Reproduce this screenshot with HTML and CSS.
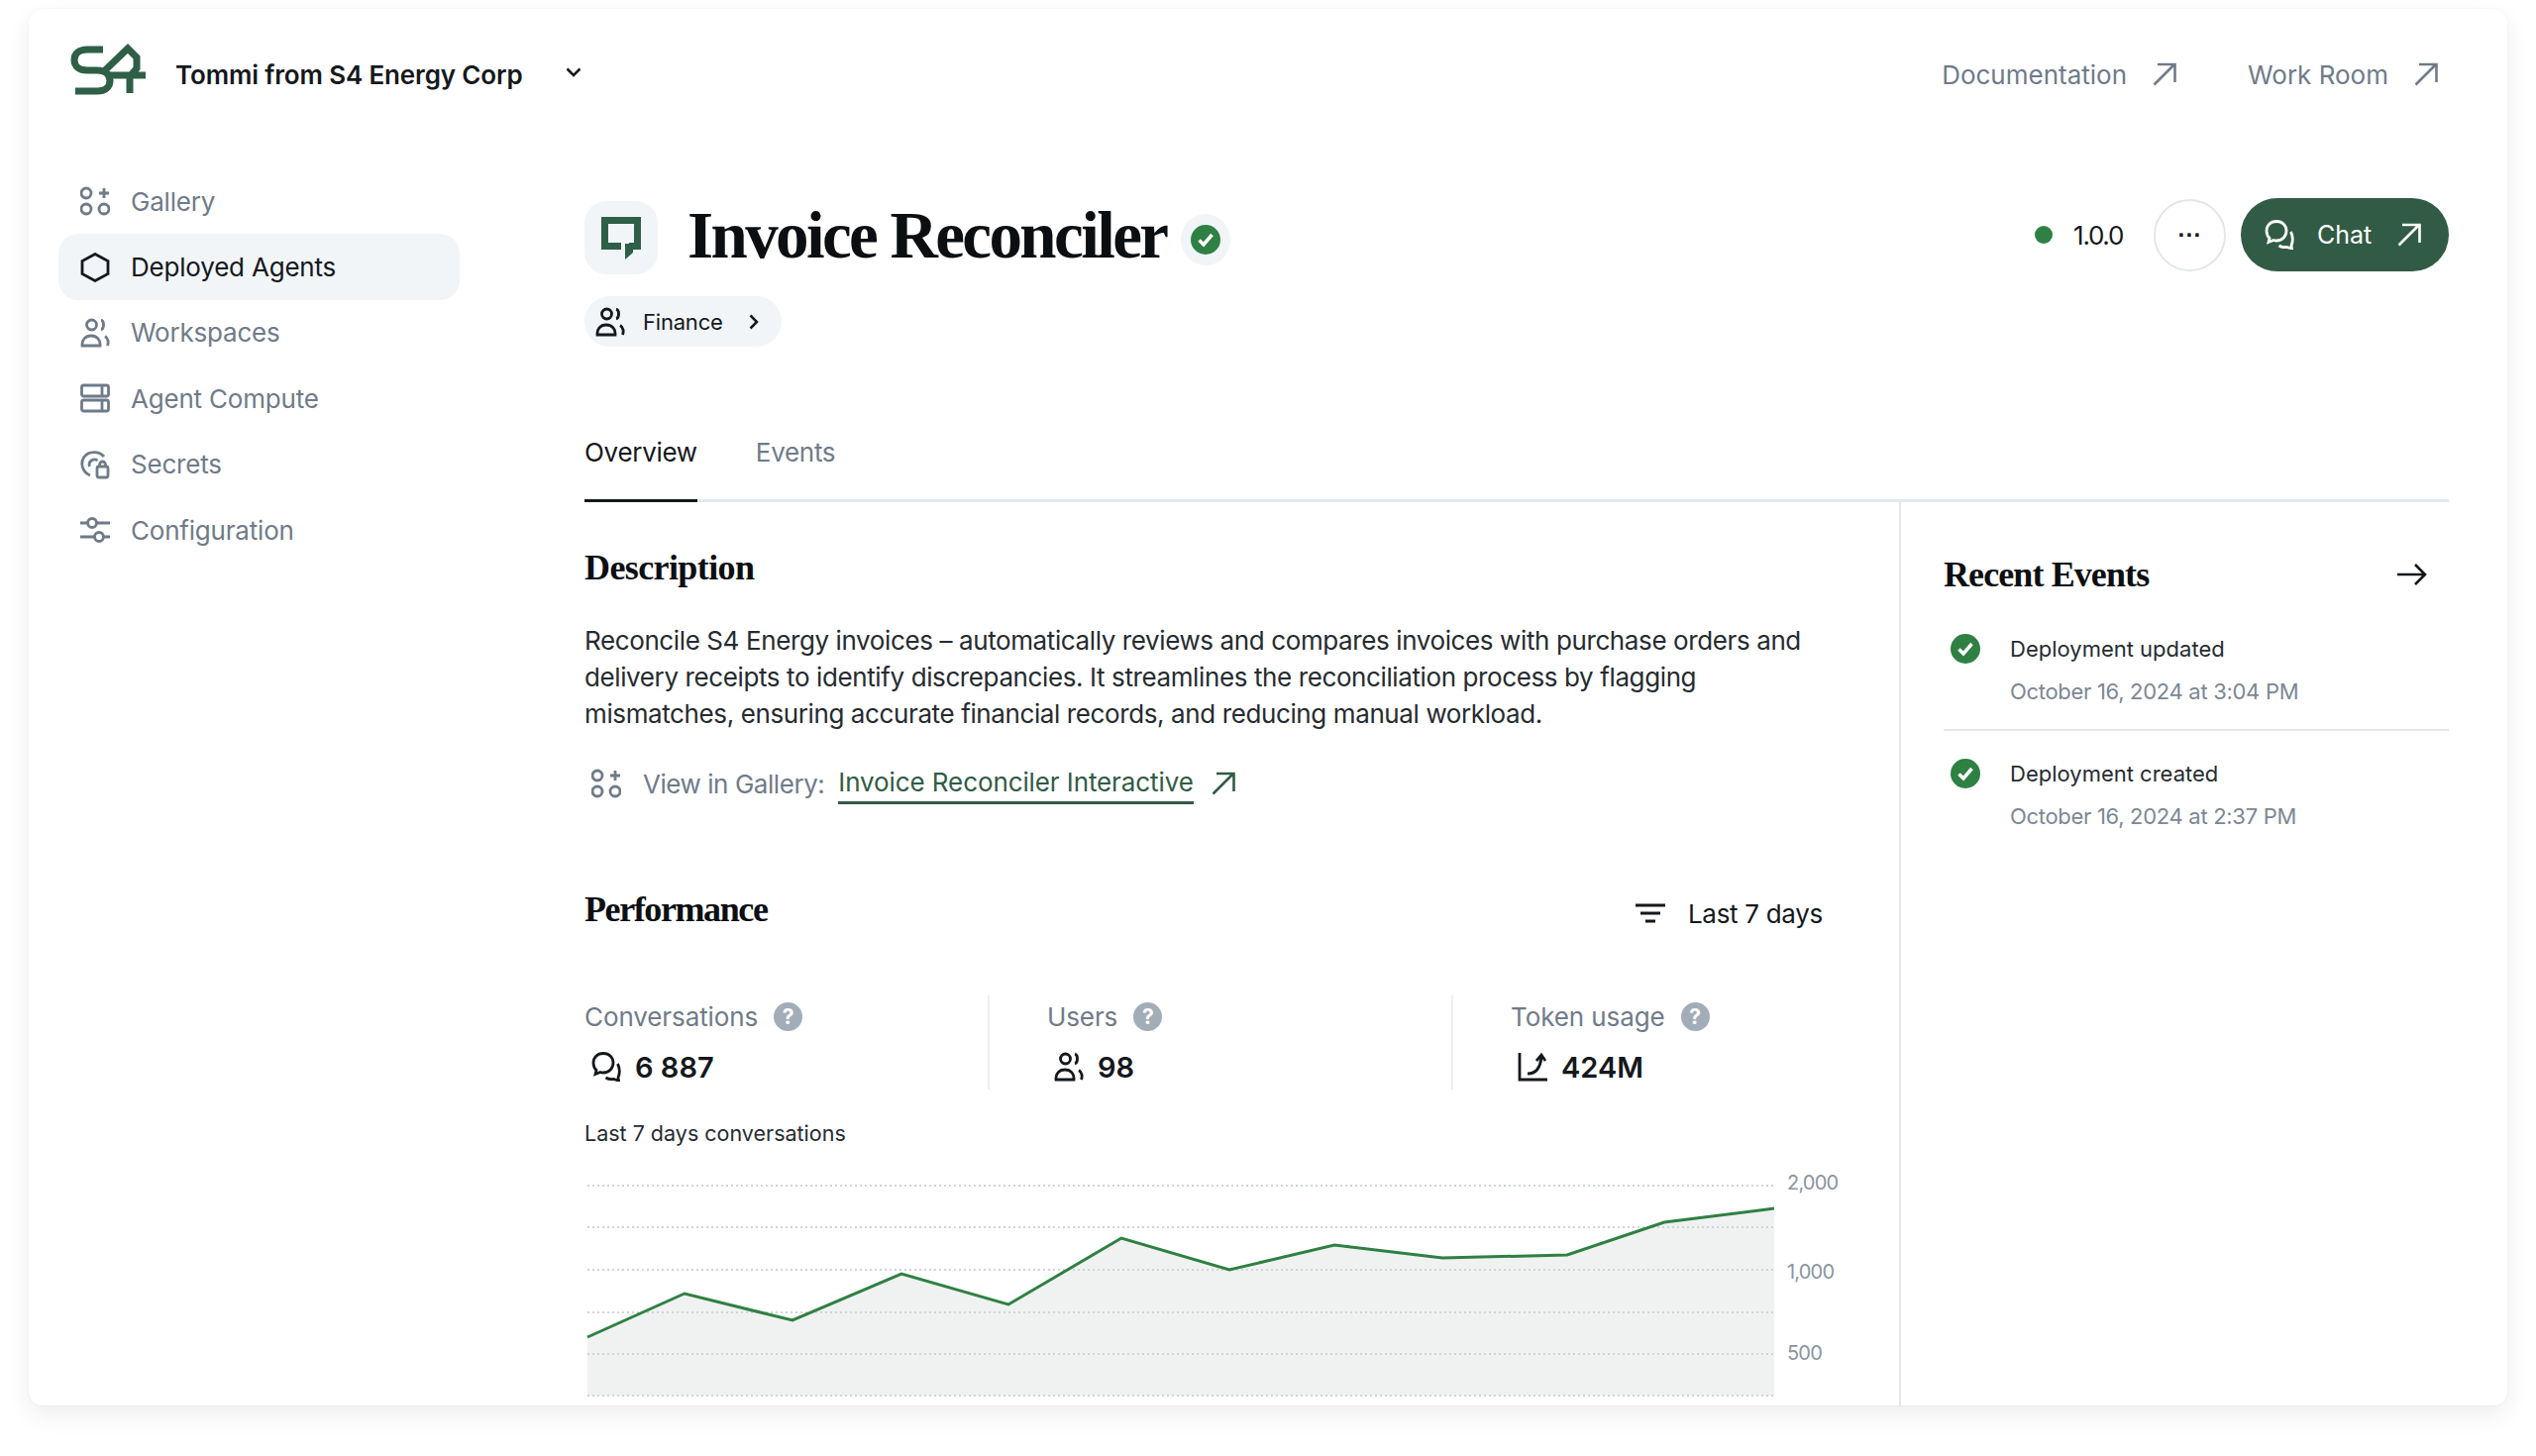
FILE: index.html
```html
<!DOCTYPE html>
<html lang="en">
<head>
    <meta charset="UTF-8">
    <title>Invoice Reconciler</title>
    <link rel="stylesheet" href="styles.css">
</head>
<body>
    <svg class="icon-defs" width="0" height="0">
        <symbol id="i-gallery" viewBox="0 0 30 30"><circle cx="6" cy="7" r="5"/><circle cx="6" cy="23" r="5"/><circle cx="24" cy="23" r="5"/><path d="M24 2v10M19 7h10"/></symbol>
        <symbol id="i-hex" viewBox="0 0 30 30"><path d="M15 1.500 28 8.500v13L15 28.500 2 21.500v-13z"/></symbol>
        <symbol id="i-people" viewBox="0 0 30 30"><circle cx="11.500" cy="7" r="5"/><path d="M21 2.200c3.400.8 3.400 8.800 0 9.600M2 28c-.6-5.500 3-10 9-10s9.600 4.500 9 10zM25 18.500c3.400 2 3.800 6.500 2.400 9.500"/></symbol>
        <symbol id="i-compute" viewBox="0 0 30 30"><rect x="1.500" y="2" width="27" height="11" rx="2"/><rect x="1.500" y="17" width="27" height="11" rx="2"/><path d="M22 2v11M22 17v11"/></symbol>
        <symbol id="i-secrets" viewBox="0 0 30 30"><path d="M24 7C19 1 8 1 3.500 8-.5 15 3 23 10 26"/><path d="M9.500 17c-2-5 4-9 8-6"/><rect x="17" y="17" width="11" height="11" rx="2"/><path d="M19.500 17v-2a3 3 0 0 1 6 0v2"/></symbol>
        <symbol id="i-config" viewBox="0 0 30 30"><path d="M0 8h7M17 8h13M0 22h14M24 22h6"/><circle cx="12" cy="8" r="4.500"/><circle cx="19" cy="22" r="4.500"/></symbol>
        <symbol id="i-chat" viewBox="0 0 30 30"><path d="M12 1.500c-6 0-10 4-10 9.500 0 3 1 5.500 3 7.500l-1 4 5-2c1 .3 2 .5 3 .5 6 0 10-4.500 10-10S18 1.500 12 1.500z"/><path d="M26.500 12c2 4 2.500 9 .5 14l.5 3-5-1.500c-3 .5-5.500 0-8-1.500"/></symbol>
        <symbol id="i-out" viewBox="0 0 24 24"><path d="M1.500 22.500 22 2M5 2h17.500v18"/></symbol>
        <symbol id="i-check" viewBox="0 0 30 30"><circle class="check-bg" cx="15" cy="15" r="15"/><path class="check-tick" d="M8.500 15.500 13 20l8.500-10"/></symbol>
    </svg>

    <div class="card">
        <header class="topbar">
            <div class="brand">
                <svg class="logo" viewBox="0 0 100 80"><path d="M44 15H28c-8 0-13 4-13 10.500S20 36 28 36h10c8 0 13 4 13 10.500S46 57 38 57H16"/><path d="M46 36 69 14l9 9v11l-6 7H50M87 41H72M71 44v15"/></svg>
                <span class="brand-name">Tommi from S4 Energy Corp</span>
                <svg class="brand-caret" viewBox="0 0 16 10"><path d="M1.500 1.500 8 8l6.500-6.500"/></svg>
            </div>
            <nav class="toplinks">
                <a class="toplink">Documentation <svg class="ic-out"><use href="#i-out"/></svg></a>
                <a class="toplink">Work Room <svg class="ic-out"><use href="#i-out"/></svg></a>
            </nav>
        </header>

        <div class="body">
            <aside class="sidebar">
                <a class="nav-item"><svg class="ic"><use href="#i-gallery"/></svg>Gallery</a>
                <a class="nav-item active"><svg class="ic"><use href="#i-hex"/></svg>Deployed Agents</a>
                <a class="nav-item"><svg class="ic"><use href="#i-people"/></svg>Workspaces</a>
                <a class="nav-item"><svg class="ic"><use href="#i-compute"/></svg>Agent Compute</a>
                <a class="nav-item"><svg class="ic"><use href="#i-secrets"/></svg>Secrets</a>
                <a class="nav-item"><svg class="ic"><use href="#i-config"/></svg>Configuration</a>
            </aside>

            <main class="main">
                <section class="head">
                    <div>
                        <div class="title-row">
                            <div class="agent-tile">
                                <svg class="agent-icon" viewBox="0 0 90 85"><path class="bubble" d="M42 48.500H25.500V22.500H58.500V48.500H50"/><path class="bubble-tail" d="M46 46h8v9l-8 7z"/></svg>
                            </div>
                            <h1>Invoice Reconciler</h1>
                            <div class="verified"><svg class="ic-check"><use href="#i-check"/></svg></div>
                        </div>
                        <a class="chip">
                            <svg class="ic chip-ic"><use href="#i-people"/></svg>
                            Finance
                            <svg class="chip-caret" viewBox="0 0 10 16"><path d="M1.500 1.500 8 8l-6.500 6.500"/></svg>
                        </a>
                    </div>
                    <div class="actions">
                        <span class="dot"></span>
                        <span class="version">1.0.0</span>
                        <button class="more">···</button>
                        <button class="chat"><svg class="ic chat-ic"><use href="#i-chat"/></svg>Chat<svg class="ic-out"><use href="#i-out"/></svg></button>
                    </div>
                </section>

                <div class="tabs">
                    <a class="tab current">Overview</a>
                    <a class="tab">Events</a>
                </div>

                <div class="columns">
                    <div class="left">
                        <h2 class="desc-title">Description</h2>
                        <p class="desc">Reconcile S4 Energy invoices – automatically reviews and compares invoices with purchase orders and delivery receipts to identify discrepancies. It streamlines the reconciliation process by flagging mismatches, ensuring accurate financial records, and reducing manual workload.</p>
                        <div class="gallery-link">
                            <svg class="ic"><use href="#i-gallery"/></svg>
                            <span class="gallery-label">View in Gallery:</span>
                            <a class="link">Invoice Reconciler Interactive</a>
                            <svg class="ic-out"><use href="#i-out"/></svg>
                        </div>

                        <div class="perf-head">
                            <h2 class="perf-title">Performance</h2>
                            <div class="range">
                                <svg class="filter-ic" viewBox="0 0 30 20"><path d="M0 2h30M5 10h20M10 18h10"/></svg>
                                Last 7 days
                            </div>
                        </div>

                        <div class="metrics">
                            <div class="metric">
                                <div class="metric-label">Conversations <span class="help">?</span></div>
                                <div class="metric-value"><svg class="ic"><use href="#i-chat"/></svg>6 887</div>
                            </div>
                            <div class="metric">
                                <div class="metric-label">Users <span class="help">?</span></div>
                                <div class="metric-value"><svg class="ic"><use href="#i-people"/></svg>98</div>
                            </div>
                            <div class="metric">
                                <div class="metric-label">Token usage <span class="help">?</span></div>
                                <div class="metric-value"><svg class="ic" viewBox="0 0 30 30"><path d="M2 1v27h28M10 22c8 0 13-6 14-17M19 9l5-6 4 6"/></svg>424M</div>
                            </div>
                        </div>

                        <div class="chart-title">Last 7 days conversations</div>
                        <svg class="chart" viewBox="590 1180 1300 240">
                            <path class="area" d="M593 1351 691 1307 800 1334 910 1287 1018 1318 1132 1251 1241 1283 1347 1258 1456 1271 1582 1268 1680 1235 1791 1221V1410H593z"/>
                            <path class="grid" d="M593 1198H1791M593 1240H1791M593 1283H1791M593 1326H1791M593 1368H1791M593 1410H1791"/>
                            <path class="line" d="M593 1351 691 1307 800 1334 910 1287 1018 1318 1132 1251 1241 1283 1347 1258 1456 1271 1582 1268 1680 1235 1791 1221"/>
                            <text x="1804" y="1202">2,000</text>
                            <text x="1804" y="1292">1,000</text>
                            <text x="1804" y="1374">500</text>
                        </svg>
                    </div>

                    <aside class="right">
                        <div class="events-head">
                            <h2>Recent Events</h2>
                            <svg class="arrow" viewBox="0 0 30 24"><path d="M0 12h28M18 2l10 10-10 10"/></svg>
                        </div>
                        <div class="event">
                            <svg class="ic-check"><use href="#i-check"/></svg>
                            <div>
                                <div class="event-name">Deployment updated</div>
                                <div class="event-date">October 16, 2024 at 3:04 PM</div>
                            </div>
                        </div>
                        <div class="event">
                            <svg class="ic-check"><use href="#i-check"/></svg>
                            <div>
                                <div class="event-name">Deployment created</div>
                                <div class="event-date">October 16, 2024 at 2:37 PM</div>
                            </div>
                        </div>
                    </aside>
                </div>
            </main>
        </div>
    </div>
</body>
</html>
```

FILE: styles.css
```css
* {
    box-sizing: border-box;
}
html, body {
    margin: 0;
    height: 1470px;
    overflow: hidden;
    background-color: #fff;
}
body {
    font-family: Inter, "Noto Sans", sans-serif;
    color: #14181c;
    padding: 9px 29px 0;
}
.icon-defs {
    position: absolute;
}
h1, h2 {
    font-family: "Liberation Serif", serif;
    font-weight: 700;
    margin: 0;
    color: #0c0f12;
}
h2 {
    font-size: 36px;
    line-height: 44px;
    letter-spacing: -0.9px;
}
a {
    text-decoration: none;
    color: inherit;
}
.card {
    height: 1410px;
    border-radius: 14px;
    background-color: #fff;
    box-shadow: 0 10px 24px rgba(0,0,0,0.07), 0 0 3px rgba(0,0,0,0.05);
    overflow: hidden;
}

/* header */
.topbar {
    height: 132px;
    display: flex;
    align-items: center;
    justify-content: space-between;
    padding: 0 70px 0 31px;
}
.brand {
    display: flex;
    align-items: center;
}
.logo {
    width: 100px;
    height: 80px;
    fill: none;
    stroke: #2f5f47;
    stroke-width: 7;
}
.brand-name {
    font-size: 26px;
    font-weight: 600;
    margin-left: 17px;
    letter-spacing: -0.15px;
}
.brand-caret {
    width: 16px;
    height: 10px;
    margin: -4px 0 0 43px;
    fill: none;
    stroke: #14181c;
    stroke-width: 2.500;
}
.toplinks {
    display: flex;
    gap: 72px;
}
.toplink {
    display: flex;
    align-items: center;
    gap: 26px;
    font-size: 26px;
    color: #6f7b89;
}
.ic-out {
    width: 24px;
    height: 24px;
    flex: none;
    fill: none;
    stroke: currentColor;
    stroke-width: 2.600;
}
.ic {
    width: 30px;
    height: 30px;
    flex: none;
    fill: none;
    stroke: currentColor;
    stroke-width: 2.800;
}

/* sidebar */
.body {
    display: flex;
}
.sidebar {
    width: 561px;
    flex: none;
    padding: 29px 0 0 30px;
}
.nav-item {
    width: 405px;
    height: 66.4px;
    display: flex;
    align-items: center;
    gap: 21px;
    padding-left: 22px;
    border-radius: 20px;
    font-size: 26px;
    letter-spacing: -0.2px;
    color: #6f7b89;
}
.nav-item.active {
    background-color: #f1f5f8;
    color: #14181c;
}

/* title */
.main {
    width: 1882px;
    flex: none;
    padding-top: 59px;
}
.head {
    height: 151px;
    display: flex;
    justify-content: space-between;
}
.title-row {
    display: flex;
    align-items: center;
    height: 80px;
    margin-bottom: 19px;
}
.agent-tile {
    width: 74px;
    height: 74px;
    border-radius: 22px;
    background-color: #f1f5f8;
    display: flex;
    align-items: center;
    justify-content: center;
}
.agent-icon {
    width: 90px;
    height: 85px;
    flex: none;
    margin: 4px 0 0 6px;
}
.bubble {
    fill: none;
    stroke: #2f5f47;
    stroke-width: 7;
}
.bubble-tail {
    fill: #2f5f47;
}
h1 {
    font-size: 67px;
    line-height: 80px;
    letter-spacing: -2.600px;
    margin: -6px 15px 0 30px;
}
.verified {
    width: 50px;
    height: 52px;
    margin-top: 4px;
    border-radius: 50%;
    background-color: #f1f5f8;
    display: flex;
    align-items: center;
    justify-content: center;
}
.ic-check {
    width: 30px;
    height: 30px;
    flex: none;
}
.check-bg {
    fill: #2f8043;
}
.check-tick {
    fill: none;
    stroke: #fff;
    stroke-width: 3.500;
}
.chip {
    width: 199px;
    height: 51px;
    display: flex;
    align-items: center;
    padding-left: 11px;
    border-radius: 26px;
    background-color: #f1f5f8;
    font-size: 22px;
    letter-spacing: -0.2px;
}
.chip-ic {
    margin-right: 18px;
}
.chip-caret {
    width: 10px;
    height: 16px;
    margin-left: 26px;
    fill: none;
    stroke: #14181c;
    stroke-width: 2.500;
}
.actions {
    height: 74px;
    display: flex;
    align-items: center;
}
.dot {
    width: 18px;
    height: 18px;
    border-radius: 50%;
    background-color: #2f8043;
}
.version {
    font-size: 26px;
    margin: 0 31px 0 21px;
    letter-spacing: -1.300px;
}
.more {
    width: 73px;
    height: 73px;
    margin-right: 15px;
    border: 2px solid #e2e6ea;
    border-radius: 50%;
    background: none;
    font-size: 24px;
    font-weight: 700;
    color: #14181c;
    padding: 0;
}
.chat {
    width: 210px;
    height: 74px;
    display: flex;
    align-items: center;
    padding: 0 0 0 24px;
    border: none;
    border-radius: 37px;
    background-color: #315b45;
    color: #fff;
    font-family: inherit;
    font-size: 25px;
}
.chat-ic {
    margin-right: 23px;
}
.chat .ic-out {
    margin-left: 26px;
}

/* tabs */
.tabs {
    display: flex;
    gap: 59px;
    margin-top: 89px;
    border-bottom: 3px solid #e2e8ee;
}
.tab {
    height: 64px;
    line-height: 34px;
    margin-bottom: -3px;
    font-size: 26px;
    letter-spacing: -0.3px;
    color: #6f7b89;
}
.tab.current {
    color: #14181c;
    border-bottom: 3px solid #14181c;
    height: 67px;
}

/* overview */
.columns {
    display: flex;
    height: 912px;
}
.left {
    width: 1329px;
    flex: none;
    border-right: 2px solid #e2e8ee;
}
.desc-title {
    margin-top: 44px;
    letter-spacing: -0.6px;
}
.desc {
    width: 1240px;
    margin: 33px 0 0;
    font-size: 26px;
    line-height: 37px;
    letter-spacing: -0.39px;
    color: #262b30;
}
.gallery-link {
    display: flex;
    align-items: center;
    height: 42px;
    margin-top: 31px;
    padding-left: 7px;
    font-size: 26px;
    letter-spacing: -0.2px;
    color: #6f7b89;
}
.gallery-label {
    margin: 0 14px 0 22px;
    letter-spacing: -0.45px;
}
.link {
    color: #315b45;
    height: 42px;
    line-height: 40px;
    letter-spacing: -0.1px;
    border-bottom: 3px solid #315b45;
}
.gallery-link .ic-out {
    color: #315b45;
    margin-left: 18px;
}
.perf-head {
    width: 1250px;
    display: flex;
    justify-content: space-between;
    align-items: center;
    margin-top: 84px;
}
.perf-title {
    letter-spacing: -1.400px;
}
.range {
    display: flex;
    align-items: center;
    gap: 23px;
    font-size: 26px;
    letter-spacing: -0.3px;
    padding-top: 8px;
}
.filter-ic {
    width: 30px;
    height: 20px;
    fill: none;
    stroke: #14181c;
    stroke-width: 3;
}
.metrics {
    display: flex;
    height: 95px;
    margin-top: 65px;
}
.metric {
    width: 468px;
    flex: none;
    padding-left: 58px;
    border-left: 2px solid #eef0f2;
}
.metric:first-child {
    width: 407px;
    padding-left: 0;
    border-left: none;
}
.metric-label {
    display: flex;
    align-items: center;
    gap: 16px;
    height: 30px;
    margin-top: 6px;
    font-size: 26px;
    letter-spacing: -0.1px;
    color: #6f7b89;
}
.help {
    width: 29px;
    height: 29px;
    border-radius: 50%;
    background-color: #a3adb8;
    color: #fff;
    font-size: 21px;
    font-weight: 700;
    line-height: 29px;
    text-align: center;
}
.metric-value {
    display: flex;
    align-items: center;
    gap: 14px;
    margin: 18px 0 0 7px;
    height: 36px;
    font-size: 29px;
    font-weight: 600;
}
.chart-title {
    margin-top: 29px;
    font-size: 21.500px;
    line-height: 30px;
    color: #262b30;
}
.chart {
    display: block;
    width: 1300px;
    height: 240px;
    margin-top: 20px;
}
.chart text {
    font-family: Inter, sans-serif;
    font-size: 20px;
    letter-spacing: -0.8px;
    fill: #8a94a0;
}
.area {
    fill: #f0f2f1;
}
.grid {
    fill: none;
    stroke: #cfd4dc;
    stroke-width: 2;
    stroke-dasharray: 2 3;
}
.line {
    fill: none;
    stroke: #2f8043;
    stroke-width: 3;
}

/* recent events */
.right {
    flex: 1;
    padding-left: 43px;
}
.events-head {
    display: flex;
    justify-content: space-between;
    align-items: center;
    margin-top: 51px;
    padding-right: 22px;
}
.arrow {
    width: 30px;
    height: 24px;
    fill: none;
    stroke: #14181c;
    stroke-width: 2.600;
}
.event {
    display: flex;
    gap: 30px;
    padding: 28px 0 23px 7px;
}
.events-head + .event {
    padding-top: 38px;
}
.event + .event {
    border-top: 2px solid #e2e8ee;
}
.event-name {
    font-size: 22px;
    line-height: 30px;
    color: #262b30;
}
.event-date {
    margin-top: 13px;
    font-size: 22px;
    line-height: 30px;
    letter-spacing: -0.3px;
    color: #7c8794;
}
```
